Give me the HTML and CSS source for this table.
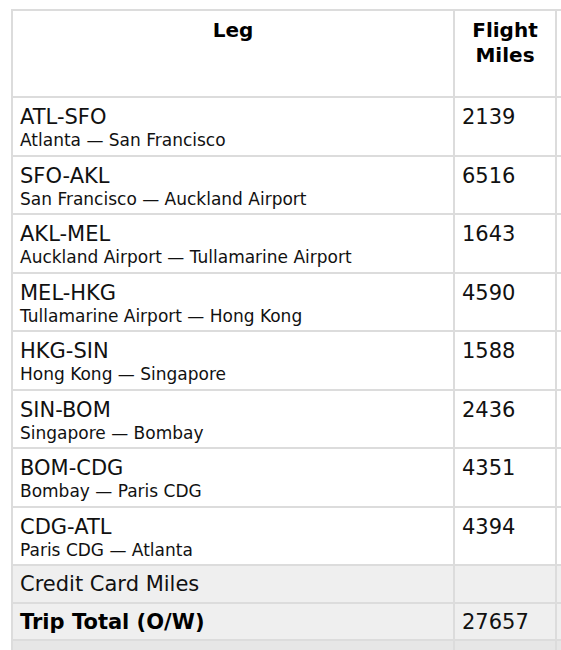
FILE: index.html
```html
<!DOCTYPE html>
<html lang="en">
<head>
<meta charset="utf-8">
<title>Trip legs</title>
<link rel="stylesheet" href="styles.css">
</head>
<body>
<div class="wrap">
<table class="legs">
  <colgroup>
    <col class="c-leg">
    <col class="c-miles">
    <col class="c-extra">
  </colgroup>
  <thead>
    <tr class="head">
      <th>Leg</th>
      <th>Flight<br>Miles</th>
      <th></th>
    </tr>
  </thead>
  <tbody>
    <tr class="leg"><td><span class="code">ATL-SFO</span><span class="cities">Atlanta — San Francisco</span></td><td class="num">2139</td><td></td></tr>
    <tr class="leg"><td><span class="code">SFO-AKL</span><span class="cities">San Francisco — Auckland Airport</span></td><td class="num">6516</td><td></td></tr>
    <tr class="leg"><td><span class="code">AKL-MEL</span><span class="cities">Auckland Airport — Tullamarine Airport</span></td><td class="num">1643</td><td></td></tr>
    <tr class="leg"><td><span class="code">MEL-HKG</span><span class="cities">Tullamarine Airport — Hong Kong</span></td><td class="num">4590</td><td></td></tr>
    <tr class="leg"><td><span class="code">HKG-SIN</span><span class="cities">Hong Kong — Singapore</span></td><td class="num">1588</td><td></td></tr>
    <tr class="leg"><td><span class="code">SIN-BOM</span><span class="cities">Singapore — Bombay</span></td><td class="num">2436</td><td></td></tr>
    <tr class="leg"><td><span class="code">BOM-CDG</span><span class="cities">Bombay — Paris CDG</span></td><td class="num">4351</td><td></td></tr>
    <tr class="leg"><td><span class="code">CDG-ATL</span><span class="cities">Paris CDG — Atlanta</span></td><td class="num">4394</td><td></td></tr>
    <tr class="sum"><td>Credit Card Miles</td><td class="num"></td><td></td></tr>
    <tr class="sum total"><td>Trip Total (O/W)</td><td class="num">27657</td><td></td></tr>
    <tr class="sum after"><td>&nbsp;</td><td></td><td></td></tr>
  </tbody>
</table>
</div>
</body>
</html>
```

FILE: styles.css
```css
html, body {
  margin: 0;
  padding: 0;
  overflow: hidden;
  background: #fff;
}

body {
  font-family: "DejaVu Sans", Verdana, sans-serif;
  color: #111;
}

.wrap {
  padding: 9px 0 0 11px;
}

.legs {
  border-collapse: collapse;
  table-layout: fixed;
  width: 684px;
}

.c-leg { width: 442px; }
.c-miles { width: 102px; }
.c-extra { width: 140px; }

.legs th,
.legs td {
  border: 2px solid #dcdcdc;
  vertical-align: top;
  text-align: left;
  padding: 5px 7px;
}

.head th {
  height: 73px;
  font-size: 20px;
  line-height: 24.5px;
  font-weight: bold;
  text-align: center;
  color: #000;
  padding-top: 7px;
  padding-bottom: 5px;
}

.leg td {
  height: 45px;
  padding: 7px 7px 4.5px;
}

.code {
  display: block;
  font-size: 21px;
  line-height: 25px;
}

.cities {
  display: block;
  font-size: 17px;
  line-height: 20px;
}

.num {
  font-size: 21px;
  line-height: 25px;
}

.sum td {
  background: #efefef;
  font-size: 21px;
  line-height: 25px;
  height: 25px;
  padding: 6px 7px 4.5px;
}

.total td:first-child {
  font-weight: bold;
  color: #000;
}

.after td {
  background: #e6e6e6;
}
```
